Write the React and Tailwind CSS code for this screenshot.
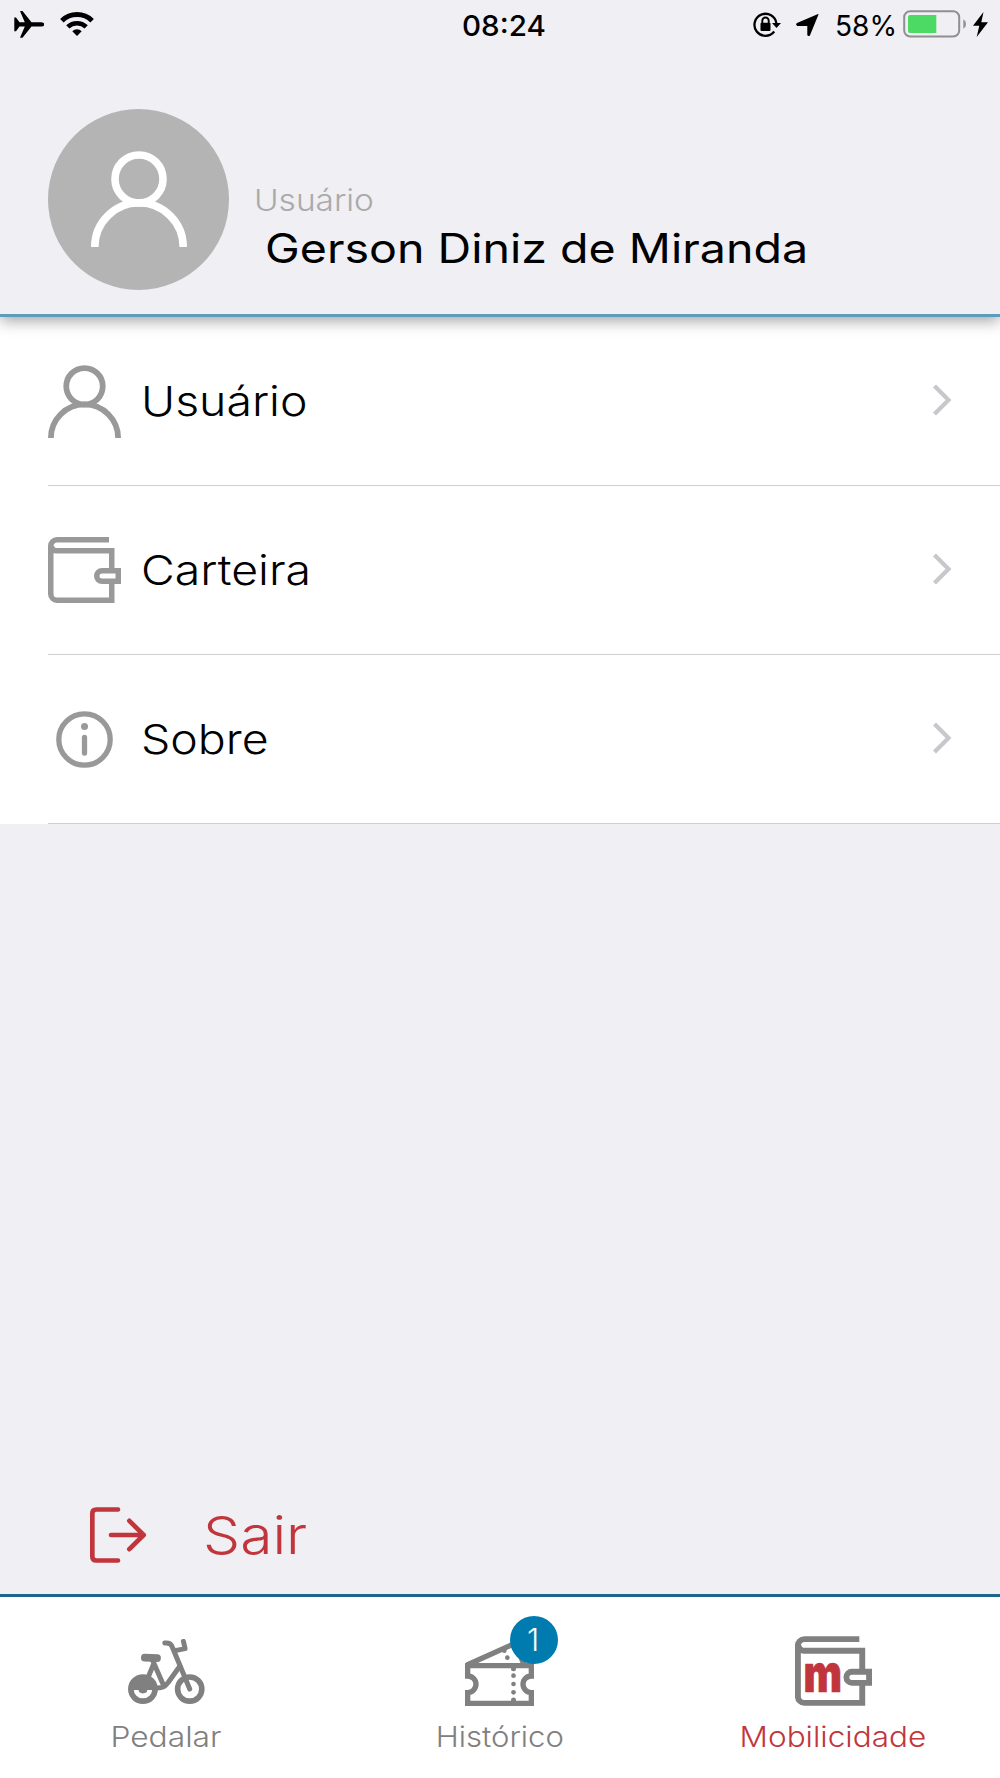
import React from "react";

function Person({ className, stroke = 7.6 }) {
  return (
    <svg viewBox="0 0 96 96" className={className} fill="none" stroke="currentColor" strokeWidth={stroke}>
      <circle cx="48" cy="28" r="24" />
      <path d="M3.8 96A44.2 44.2 0 0 1 92.2 96" />
    </svg>
  );
}

function Wallet({ className, stroke = 5.5, children }) {
  return (
    <svg viewBox="0 0 73 66" className={className} fill="none" stroke="currentColor" strokeWidth={stroke}>
      <path d="M61 2.75H9A6.25 6.25 0 0 0 2.75 9V57A6.25 6.25 0 0 0 9 63.25H63.75V46M63.75 32V13.75H9A5 5 0 0 1 3.5 9" />
      <path d="M70.25 33.75H54A5.25 5.25 0 0 0 54 44.25H70.25Z" />
      {children}
    </svg>
  );
}

function Info({ className }) {
  return (
    <svg viewBox="0 0 57 57" className={className} fill="none" stroke="currentColor" strokeLinecap="round">
      <circle cx="28.5" cy="28.5" r="25.7" strokeWidth="5.3" />
      <path d="M28.5 26.5V42" strokeWidth="5.3" />
      <circle cx="28.5" cy="15.6" r="3.5" fill="currentColor" stroke="none" />
    </svg>
  );
}

function Bike() {
  return (
    <svg viewBox="114 86 232 196" className="h-[65px] w-[77px]" fill="none" stroke="currentColor" strokeWidth="15" strokeLinecap="round" strokeLinejoin="round">
      <circle cx="159" cy="237" r="36.5" strokeWidth="17" />
      <path d="M120 240A39 39 0 0 1 198 240H172A13 10 0 0 1 146 240Z" fill="currentColor" stroke="none" />
      <circle cx="300" cy="237" r="36.5" strokeWidth="17" />
      <rect x="153" y="131.500" width="60" height="23" rx="11" fill="currentColor" stroke="none" transform="rotate(2 183 143)" />
      <path d="M189 152L219 221M190 164L177 196" />
      <path d="M198 234C222 235 228 226 235 217L270 168" />
      <path d="M225 98C240 97 244 101 249 114L300 237" />
      <path d="M256 121L286 115L281 93" />
    </svg>
  );
}

function Ticket() {
  return (
    <svg viewBox="136 120 207 198" className="h-[66px] w-[69px]" fill="none" stroke="currentColor" strokeWidth="16">
      <path d="M144 197V228A25 25 0 0 1 144 278V310H335V278A25 25 0 0 1 335 228V197Z" />
      <path d="M142 195L288 129L312 192" />
      <g fill="currentColor" stroke="none">
        <circle cx="254" cy="152" r="7" />
        <circle cx="263" cy="173" r="7" />
        <circle cx="281.500" cy="206" r="7.500" />
        <circle cx="281.500" cy="227" r="7" />
        <circle cx="281.500" cy="252" r="7" />
        <circle cx="281.500" cy="277" r="7" />
        <circle cx="281.500" cy="300" r="7.500" />
      </g>
    </svg>
  );
}

function Chevron() {
  return (
    <svg viewBox="0 0 20 32" className="mr-[48px] mb-[2px] h-8 w-5" fill="none" stroke="#c7c7cc" strokeWidth="4.200">
      <path d="M2.500 2L16.500 16L2.500 30" />
    </svg>
  );
}

function StatusBar() {
  return (
    <div className="flex h-[50px] items-center">
      <svg viewBox="0 0 30 27" className="mb-[2px] ml-[14px] h-[27px] w-[30px] shrink-0">
        <path d="M0.300 6.500H2L5.500 11.200H10.800L6.200 0.500Q6 0 6.600 0H8.500L17.500 11.200H27.500Q30.300 11.500 30.300 13.400T27.500 15.600H17.500L8.500 26.800H6.600Q6 26.800 6.200 26.300L10.800 15.600H5.500L2 20.300H0.300Z" />
      </svg>
      <svg viewBox="0 0 34 25" className="mb-[2px] ml-[16px] h-[25px] w-[34px] shrink-0" fill="none" stroke="#000">
        <path d="M1.900 8.700A21.500 21.500 0 0 1 32.100 8.700" strokeWidth="5" />
        <path d="M7.800 14.900A13.300 13.300 0 0 1 26.200 14.900" strokeWidth="4.600" />
        <path d="M12.300 19.300A6.700 6.700 0 0 1 21.700 19.300L17 24Z" fill="#000" stroke="none" />
      </svg>
      <span className="ml-[367.500px] w-[85px] origin-left scale-x-[1.020] text-[29px] leading-[51px] font-medium whitespace-nowrap">08:24</span>
      <svg viewBox="0 0 28 25" className="mb-[2px] ml-[206.500px] h-[25px] w-[28px] shrink-0" fill="none" stroke="#000" strokeWidth="2.300">
        <path d="M21.200 19.500A11 11 0 1 1 23.400 11.500" />
        <path d="M19 11H28L23.500 16Z" fill="#000" stroke="none" />
        <rect x="7.500" y="10.700" width="10" height="8.300" rx="1" fill="#000" stroke="none" />
        <path d="M9.300 11V8.700A3.200 3.200 0 0 1 15.700 8.700V11" strokeWidth="1.900" />
      </svg>
      <svg viewBox="0 0 23 22" className="ml-[15px] h-[22px] w-[23px] shrink-0">
        <path d="M22.500 0.500L13.900 21.500Q12.600 22.900 11.300 21V11.900H1.200Q-0.900 10.300 1 8.900L21.500 0.200Q22.800 -0.200 22.500 0.500Z" />
      </svg>
      <span className="ml-[16px] w-[68px] origin-left scale-x-[0.97] text-[29px] leading-[51px] whitespace-nowrap">58%</span>
      <svg viewBox="0 0 64 28" className="mb-[2px] h-7 w-16 shrink-0">
        <rect x="1.200" y="1.200" width="55" height="25.300" rx="6" fill="none" stroke="#8e8e93" strokeWidth="2" />
        <path d="M5 7Q5 5 7 5H33.300V23H7Q5 23 5 21Z" fill="#4cd964" />
        <path d="M60.300 9.300Q63 10.700 63 14T60.300 18.700Z" fill="#8e8e93" />
      </svg>
      <svg viewBox="0 0 15 25" className="mb-px ml-[6px] h-[25px] w-[15px] shrink-0">
        <path d="M10.500 0L0 13.700H6.300L3.700 25L15 10.300H8.300Z" />
      </svg>
    </div>
  );
}

const rows = [
  { label: "Usuário", icon: <Person className="h-[73px] w-[73px]" stroke={7.6} /> },
  { label: "Carteira", icon: <Wallet className="h-[66px] w-[73px]" /> },
  { label: "Sobre", icon: <Info className="h-[57px] w-[57px]" /> },
];

export default function App() {
  return (
    <div className="flex h-[1778px] w-[1000px] flex-col overflow-hidden bg-[#efeff4] font-['Inter',sans-serif] text-black">
      <header className="relative z-10 flex h-[317px] shrink-0 flex-col border-b-[3px] border-[#5b9dba] bg-[#efeff4] shadow-[0_4px_14px_rgba(0,0,0,0.36)]">
        <StatusBar />
        <div className="flex">
          <div className="mt-[59px] ml-[48px] flex h-[181px] w-[181px] shrink-0 justify-center rounded-full bg-[#b4b4b4] pt-[42px] text-white">
            <Person className="h-24 w-24" />
          </div>
          <div className="mt-[130px] ml-[25px] whitespace-nowrap">
            <div className="origin-left scale-x-[1.115] text-[30px] leading-[40px] font-light text-[#aaaaaa]">Usuário</div>
            <div className="ml-[10.500px] origin-left scale-x-[1.150] text-[40.500px] leading-[57px] font-normal">Gerson Diniz de Miranda</div>
          </div>
        </div>
      </header>

      <ul className="shrink-0 bg-white">
        {rows.map((row) => (
          <li key={row.label} className="flex h-[169px] pl-[48px]">
            <div className="flex grow items-center border-b border-[#cfcfd3]">
              <div className="flex w-[73px] shrink-0 justify-center text-[#999999]">{row.icon}</div>
              <span className="ml-[19.500px] origin-left scale-x-[1.132] text-[41px] leading-[60px] font-light">{row.label}</span>
              <div className="grow" />
              <Chevron />
            </div>
          </li>
        ))}
      </ul>

      <div className="grow" />

      <button className="flex h-[117px] shrink-0 items-center pl-[90px] text-[#c1363c]">
        <svg viewBox="60 82 168 167" className="mb-[2px] h-[56px] w-[56px]" fill="none" stroke="currentColor" strokeWidth="14" strokeLinecap="round" strokeLinejoin="round">
          <path d="M144 89H79Q67 89 67 101V230Q67 242 79 242H144" />
          <path d="M123 165.500H220M178 123L221 165.500L178 208" />
        </svg>
        <span className="ml-[56.500px] origin-left scale-x-[1.130] text-[52px] leading-[80px] font-light">Sair</span>
      </button>

      <nav className="grid h-[184px] shrink-0 grid-cols-3 border-t-[3px] border-[#1c668c] bg-white text-[28px] leading-[40px] font-light text-[#808080]">
        <div className="flex flex-col items-center">
          <div className="flex h-[120px] items-end pb-[13px]">
            <Bike />
          </div>
          <span className="mr-px scale-x-[1.135]">Pedalar</span>
        </div>
        <div className="flex flex-col items-center">
          <div className="relative flex h-[120px] items-end pb-[11px]">
            <Ticket />
            <span className="absolute top-[19px] left-[45px] h-12 w-12 rounded-full bg-[#007bb0] pr-[3px] text-center text-[31px] leading-[48px] text-white">1</span>
          </div>
          <span className="scale-x-[1.110]">Histórico</span>
        </div>
        <div className="flex flex-col items-center text-[#c1363c]">
          <div className="flex h-[120px] items-end pb-[11px] text-[#808080]">
            <Wallet className="h-[70px] w-[77px]" stroke={5.6}>
              <text x="8" y="53.300" textLength="36.500" lengthAdjust="spacingAndGlyphs" fill="#c1363c" stroke="#c1363c" strokeWidth="0.600" strokeLinejoin="round" fontFamily="Inter" fontWeight="900" fontSize="49">m</text>
            </Wallet>
          </div>
          <span className="scale-x-[1.126]">Mobilicidade</span>
        </div>
      </nav>
    </div>
  );
}
